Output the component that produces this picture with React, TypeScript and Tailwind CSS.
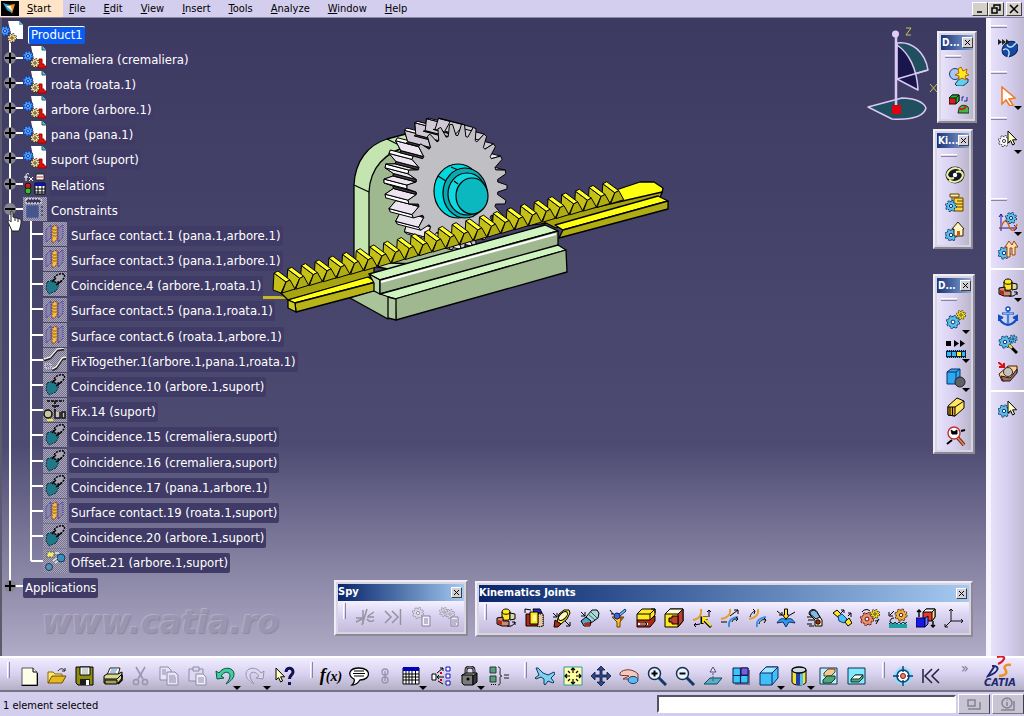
import { Fragment, ReactNode } from "react";

const UI_FONT = "font-['Tahoma','DejaVu_Sans_Condensed','Noto_Sans',sans-serif]";

type IconProps = { children: ReactNode; className?: string };

const Icon = ({ children, className = "size-5" }: IconProps) => (
  <svg viewBox="0 0 20 20" className={`block shrink-0 ${className}`} fill="none" aria-hidden="true">
    {children}
  </svg>
);

type CogProps = { x: number; y: number; r: number; fill?: string; line?: string };

const Cog = ({ x, y, r, fill = "#5cc0f0", line = "#10305c" }: CogProps) => {
  const step = (Math.PI * 2 * r) / 16;
  return (
    <g>
      <circle cx={x} cy={y} r={r} stroke={line} strokeWidth="3" strokeDasharray={`${step} ${step}`} />
      <circle cx={x} cy={y} r={r} fill={fill} stroke={line} />
      <circle cx={x} cy={y} r={r} stroke={fill} strokeWidth="1.4" strokeDasharray={`${step} ${step}`} />
      <circle cx={x} cy={y} r={r * 0.35} fill="#fff" stroke={line} />
    </g>
  );
};

const Cursor = ({ x, y, fill = "#ffffc0" }: { x: number; y: number; fill?: string }) => (
  <path
    d={`M${x} ${y}v12l2.600-2.400 2 4.400 2-1-2-4.200h4z`}
    fill={fill}
    stroke="#000"
    strokeWidth="1"
  />
);

/* ---------- standard toolbar icons ---------- */

const icons: Record<string, ReactNode> = {
  new: (
    <>
      <path d="M3 2h11l4 4v13H3z" fill="#ffffe8" stroke="#55546a" />
      <path d="M14 2v4h4" stroke="#000" fill="#fff" />
      <path d="M2.500 19.500h16V7" stroke="#000" />
    </>
  ),
  open: (
    <>
      <path d="M1 17V6h5l2 2h7v3" fill="#ffe87a" stroke="#8a6a00" />
      <path d="M1 17l4-7h14l-4 7z" fill="#e8b820" stroke="#6a5000" />
      <path d="M11 5c2-3 5-3 7 0m0-3v3h-3" stroke="#222" />
    </>
  ),
  save: (
    <>
      <path d="M1 1h17v18H3l-2-2z" fill="#8c8c10" stroke="#000" />
      <path d="M5 1h10v8H5z" fill="#fff" stroke="#000" />
      <path d="M7 3h6M7 5h6M7 7h6" stroke="#9aa" />
      <path d="M5 13h10v6H5z" fill="#1c1c1c" />
      <path d="M11 14h3v5h-3z" fill="#fff" />
    </>
  ),
  print: (
    <>
      <path d="M7 2h10l-2 7H4z" fill="#fff" stroke="#222" />
      <path d="M8 4h6M7 6h6" stroke="#4a90c0" />
      <path d="M1 10l3-2h11l4-2v6l-4 5H1z" fill="#d8d890" stroke="#000" />
      <path d="M1 13h13l5-5" stroke="#000" />
      <path d="M2 14h12v4H2z" fill="#a0a060" stroke="#000" />
      <path d="M15 18l4-4V9" stroke="#000" strokeWidth="1.500" />
    </>
  ),
  cut: (
    <g stroke="#9894ac" strokeWidth="1.500">
      <path d="M5 1l7 12M14 1L7 13" />
      <circle cx="5" cy="16" r="2.600" />
      <circle cx="14" cy="16" r="2.600" />
    </g>
  ),
  copy: (
    <g stroke="#8f8ba5" fill="#e8e4f8">
      <path d="M1 1h8l3 3v10H1z" />
      <path d="M8 6h8l3 3v10H8z" />
      <path d="M3 4h4M3 6h4M3 8h4M10 10h6M10 12h7M10 14h7M10 16h7" />
    </g>
  ),
  paste: (
    <g stroke="#8f8ba5" fill="#dcd8ee">
      <path d="M2 3h14v12H2z" />
      <path d="M6 1h6v4H6z" />
      <path d="M9 8h7l3 3v8H9z" fill="#f0edff" />
      <path d="M11 12h6M11 14h6M11 16h6" />
    </g>
  ),
  undo: (
    <path
      d="M1 5l1 8 7-1-3-2c3-5 9-5 9 0 0 3-2 5-4 8 5-3 8-6 8-10C19 1 8 0 4 7z"
      fill="#40d0a0"
      stroke="#105040"
    />
  ),
  redo: (
    <path
      d="M19 5l-1 8-7-1 3-2c-3-5-9-5-9 0 0 3 2 5 4 8-5-3-8-6-8-10C1 1 12 0 16 7z"
      fill="#dcd8ee"
      stroke="#9894ac"
    />
  ),
  help: (
    <>
      <Cursor x={1} y={2} />
      <path d="M11 6c0-5 7-5 7 0 0 3-3.500 3-3.500 7M14.500 16v3" stroke="#101058" strokeWidth="3" />
    </>
  ),
  comment: (
    <>
      <path d="M10 2c13 0 12 12 1 12-2 3-5 5-8 5 2-2 3-4 2-6C-2 9 0 2 10 2z" fill="#fff" stroke="#000" strokeWidth="1.300" />
      <path d="M5 5h10M4 7.500h12M5 10h10" stroke="#000" />
    </>
  ),
  link: (
    <g stroke="#9894ac" strokeWidth="1.300">
      <circle cx="10" cy="6" r="3" />
      <circle cx="10" cy="14" r="3" />
      <path d="M10 5v10" />
    </g>
  ),
  table: (
    <>
      <path d="M2 2h16v16H2z" fill="#fff" stroke="#000" />
      <path d="M2 1h16v4H2z" fill="#0000c0" />
      <path d="M2 8h16M2 11h16M2 14h16M5 5v13M8 5v13M11 5v13M14.500 5v13" stroke="#000" strokeWidth="1" />
    </>
  ),
  graph: (
    <>
      <path d="M1 8h4v6H1z" fill="#fff" stroke="#000" />
      <path d="M6 11h7M8 9l-2 2 2 2M6 7l6-5M12 5V2H9M7 15l5 3" stroke="#000" />
      <path d="M15 1h4v4h-4zM15 8h4v4h-4zM15 15h4v4h-4z" fill="#fff" stroke="#1010c0" />
      <path d="M10 6v2M10 13v2" stroke="#d00000" strokeWidth="2" />
    </>
  ),
  lock: (
    <>
      <path d="M7 9V4c0-4 8-4 8 0v5" stroke="#222" strokeWidth="3" />
      <path d="M7 9V4c0-4 8-4 8 0v5" stroke="#a8a8a8" strokeWidth="1" />
      <path d="M3 9l4-2h11l-3 3H3z" fill="#a8a8a8" stroke="#000" />
      <path d="M3 9h11v10H5l-2-2z" fill="#7a7a7a" stroke="#000" />
      <path d="M14 10l4-3v9l-4 3z" fill="#383838" stroke="#000" />
      <circle cx="9" cy="13" r="1.500" fill="#000" />
    </>
  ),
  list: (
    <>
      <path d="M1 1h6v6H1zM1 10h6v6H1z" fill="#50a080" stroke="#333" />
      <path d="M2 18.500h5" stroke="#000" strokeDasharray="1 1" />
      <path d="M9 1c3 0 2 3 2 6s1 3 2 3c-1 0-2 0-2 3s1 6-2 6M15 9h5M15 12h5" stroke="#222" />
    </>
  ),
  fly: (
    <path
      d="M1 2l2 0 5 5 5 2 6-3 1 2-4 4 3 4-1 1-5-2-3 4-1-1v-5l-3-2-5 2-1-1 4-3z"
      fill="#80d0f4"
      stroke="#103858"
    />
  ),
  fit: (
    <>
      <path d="M1 1h18v18H1z" fill="#ffffa0" stroke="#2898b0" />
      <path
        d="M10 2v5M8 4l2-2 2 2M10 18v-5M8 16l2 2 2-2M2 10h5M4 8l-2 2 2 2M18 10h-5M16 8l2 2-2 2M5 5l2 2M15 5l-2 2M5 15l2-2M15 15l-2-2"
        stroke="#000"
        strokeWidth="1.200"
      />
    </>
  ),
  pan: (
    <path
      d="M10 0l4 4h-3v5h5V6l4 4-4 4v-3h-5v5h3l-4 4-4-4h3v-5H4v3l-4-4 4-4v3h5V4H6z"
      fill="#2a4a90"
      stroke="#101838"
      strokeWidth=".8"
    />
  ),
  rotate: (
    <>
      <path d="M1 7c3-4 12-5 18 1v5c-4 4-8 3-9 0H4l6-3c-3-1-7 0-9-1z" fill="#f8c8b8" stroke="#703838" />
      <ellipse cx="14" cy="14" rx="5" ry="3.600" fill="#60b8f0" stroke="#104070" />
    </>
  ),
  zoomIn: (
    <>
      <path d="M11 11l8 8" stroke="#103868" strokeWidth="3" />
      <circle cx="7.500" cy="7.500" r="6" fill="#e8f4ff" stroke="#183050" strokeWidth="1.500" />
      <path d="M4.500 7.500h6M7.500 4.500v6" stroke="#000" strokeWidth="2" />
    </>
  ),
  zoomOut: (
    <>
      <path d="M11 11l8 8" stroke="#103868" strokeWidth="3" />
      <circle cx="7.500" cy="7.500" r="6" fill="#e8f4ff" stroke="#183050" strokeWidth="1.500" />
      <path d="M4.500 7.500h6" stroke="#000" strokeWidth="2" />
    </>
  ),
  normal: (
    <>
      <path d="M1 18l6-6h12l-5 6z" fill="#58b0c8" stroke="#104858" />
      <path d="M10 15V4" stroke="#554a80" strokeDasharray="2 1" />
      <path d="M7 6l3-5 3 5z" fill="#e8e4f8" stroke="#554a80" />
    </>
  ),
  multi: (
    <>
      <path d="M4 4h15v15H4z" fill="#7a7890" />
      <path d="M2 2h15v15H2z" fill="#38c8f8" stroke="#101858" />
      <path d="M10 2h7v7h-7z" fill="#7a60d8" stroke="#101858" />
      <path d="M9.500 2v15M2 9.500h15" stroke="#101858" strokeWidth="1.200" />
    </>
  ),
  iso: (
    <>
      <path d="M1 7l6-6h12v11l-6 7H1z" fill="#40c0f8" stroke="#102868" />
      <path d="M1 7l6-6h12l-6 6z" fill="#a0e8ff" stroke="#102868" />
      <path d="M13 7v12" stroke="#102868" />
    </>
  ),
  shading: (
    <>
      <path d="M3 4v12c0 4 14 4 14 0V4z" fill="#f0e040" stroke="#000" />
      <path d="M7 6v13h4V6z" fill="#2040a0" />
      <path d="M11 6v13h3V6z" fill="#50c0e8" />
      <ellipse cx="10" cy="4" rx="7" ry="3" fill="#d0d8e0" stroke="#000" strokeWidth="1.300" />
    </>
  ),
  hide: (
    <>
      <path d="M1 2h17v16H1z" fill="#c0f0ff" stroke="#103050" />
      <path d="M5 7l4-4h7v3l-4 4H5z" fill="#f0c890" stroke="#604020" />
      <path d="M4 14l4-4h8v3l-4 4H4z" fill="#50a878" stroke="#103828" />
    </>
  ),
  swap: (
    <>
      <path d="M1 2h17v16H1z" fill="#80e8ff" stroke="#103050" />
      <path d="M4 13l4-4h8v3l-4 4H4z" fill="#50a878" stroke="#103828" />
      <path d="M4 13h8l4-4H8z" fill="#fff" stroke="#103828" />
    </>
  ),
  target: (
    <>
      <circle cx="10" cy="10" r="9" fill="#90e0f8" />
      <circle cx="10" cy="10" r="6" fill="#fff" stroke="#104070" strokeWidth="1.600" />
      <circle cx="10" cy="10" r="2.500" fill="#f08060" stroke="#702020" />
      <path d="M10 0v6M10 14v6M0 10h6M14 10h6" stroke="#103878" strokeWidth="1.400" />
    </>
  ),
  rewind: <path d="M2 3v14M11 3l-7 7 7 7M18 3l-7 7 7 7" stroke="#222040" strokeWidth="1.500" />,

  /* spy */
  spyCut: (
    <path d="M1 11h6M8 3v14M12 2L7 18M19 5l-6 4M12 10h7M12 12c2 3 5 3 7 1M1 15l6-3" stroke="#96929f" strokeWidth="1.500" />
  ),
  spyEnd: <path d="M2 4l6 6-6 6M9 4l6 6-6 6M17.500 2v16" stroke="#96929f" strokeWidth="1.500" />,
  spyCog: (
    <>
      <Cog x={7} y={6} r={4.5} fill="#dcd8ee" line="#96929f" />
      <path d="M11 9h8v10h-8zM13 12h4M13 14h4M13 16h4" fill="#f4f0ff" stroke="#85819a" />
    </>
  ),
  spyCogs: (
    <>
      <Cog x={5} y={5} r={3.5} fill="#dcd8ee" line="#96929f" />
      <Cog x={11} y={7} r={3.5} fill="#dcd8ee" line="#96929f" />
      <path d="M12 10h7v9h-7zM13 13h5M13 15h5M13 17h4" fill="#f4f0ff" stroke="#85819a" />
    </>
  ),

  /* joints */
  revolute: (
    <>
      <path d="M6 4c0-4 8-4 8 0v6c0 3-8 3-8 0z" fill="#ffe820" stroke="#000" />
      <path d="M6 4c0 3 8 3 8 0" stroke="#000" />
      <path d="M14 5l5 1v5l-5 1z" fill="#e0d8a0" stroke="#000" />
      <path d="M1 10l6-1v4h6v5H6l-5-2z" fill="#d08878" stroke="#000" />
      <path d="M2 12l4 1v4l-4-1z" fill="#b02818" />
      <path d="M11 18c4 1 7-1 8-4M19 17v-3h-3" stroke="#000" />
    </>
  ),
  prismatic: (
    <>
      <path d="M2 6h17v12H2z" fill="#b02818" stroke="#000" />
      <path d="M14 6h5v12l-5 1z" fill="#e8c8a0" stroke="#000" strokeDasharray="1 1" />
      <path d="M9 1h7l2 4h-8z" fill="#2030d0" stroke="#000" />
      <path d="M6 4h8v12H6z" fill="#ffe820" stroke="#000" />
      <path d="M9 7h3v6H9z" fill="#fff8a0" />
      <path d="M1 1l6 1M1 1v4" stroke="#000" />
    </>
  ),
  cylindrical: (
    <>
      <path d="M5 14l2-8 5-4h5l1 3-3 6-6 5z" fill="#ffe820" stroke="#000" />
      <ellipse cx="11" cy="8" rx="5.500" ry="3" transform="rotate(-45 11 8)" fill="#fff8c0" stroke="#000" />
      <path d="M3 12l6 4-3 3H2z" fill="#b02818" stroke="#000" />
      <path d="M1 5l4 4M1 9h4V5M13 13l5 5M18 14v4h-4" stroke="#000" />
    </>
  ),
  screw: (
    <>
      <path d="M6 9l6-7h5l2 3-1 5-7 5z" fill="#a8d8d8" stroke="#000" />
      <path d="M8 6l7 6M11 4l6 6" stroke="#405860" />
      <path d="M1 13l5-4 5 4-1 5H4z" fill="#50a8c8" stroke="#000" />
      <path d="M4 15l6-1v4H5z" fill="#b02818" />
      <path d="M1 4l4 4M1 8h4V4" stroke="#000" />
    </>
  ),
  spherical: (
    <>
      <path d="M4 9h12l-4 5v5H9v-5z" fill="#ffc020" stroke="#604000" />
      <path d="M12 9v5l3-5z" fill="#b04010" />
      <circle cx="9" cy="8" r="3" fill="#4060e0" stroke="#102060" />
      <path d="M11 6l6-5 1 2-6 5z" fill="#60c8f8" stroke="#103060" />
      <path d="M2 2l3 4M3 6h3" stroke="#000" />
    </>
  ),
  planar: (
    <>
      <path d="M1 12l5-4h13v5l-5 6H1z" fill="#b02818" stroke="#000" />
      <path d="M1 6l5-5h13v6l-5 5H1z" fill="#ffe820" stroke="#000" />
      <path d="M1 6h13l5-5M14 6v6" stroke="#000" />
      <path d="M2 15h10v2H2z" fill="#fff" />
      <path d="M4 16h7M9 14l2 2-2 2M15 5l4-4M15 1h4v4" stroke="#000" />
    </>
  ),
  rigid: (
    <>
      <path d="M1 6l5-5h13v12l-5 6H1z" fill="#ffe820" stroke="#000" />
      <path d="M14 6l5-5v12l-5 6z" fill="#c04030" stroke="#000" />
      <path d="M1 6h13l5-5H6z" fill="#fff8d0" stroke="#000" />
      <path d="M8 8h6v8H8v-2H5v-4h3z" fill="#c04030" stroke="#000" />
    </>
  ),
  pointCurve: (
    <>
      <path d="M9 1c1 6-2 10-8 11" stroke="#e0a020" strokeWidth="2" />
      <path d="M19 19l-8-8M10 16v-6h6" stroke="#000" strokeWidth="3" />
      <path d="M19 18l-8-8v5M11 10h5" stroke="#ffe820" strokeWidth="1.800" />
      <path d="M17 9V2M15 4l2-2 2 2M8 16l-6 1M4 15l-2 2 2 2" stroke="#000" />
    </>
  ),
  slideCurve: (
    <>
      <path d="M10 1c1 6-3 9-9 10" stroke="#e0a020" strokeWidth="1.800" />
      <path d="M9 19c-1-6 2-9 9-10" stroke="#3090e0" strokeWidth="1.800" />
      <path d="M1 14h6M10 8l8-6M14 2h4v4M12 14c1-3 3-3 6-3M16 9l2 2-2 2" stroke="#000" />
    </>
  ),
  rollCurve: (
    <>
      <path d="M10 1c1 6-3 9-9 10" stroke="#e0a020" strokeWidth="1.800" />
      <path d="M9 19c-1-6 2-9 9-10" stroke="#3090e0" strokeWidth="1.800" />
      <path d="M2 9c1-4 4-6 5-6M5 1l2 2-1 3M11 16c1-4 4-5 7-4M16 10l2 2-2 3" stroke="#000" />
    </>
  ),
  pointSurface: (
    <>
      <path d="M1 15c2-4 6-6 9-3 3-3 7-1 9 3l-6-1-3 5-3-5z" fill="#3098e8" stroke="#103070" />
      <path d="M8.500 1h3v6h2l-3.500 4-3.500-4h2z" fill="#ffe820" stroke="#000" />
      <path d="M1 3l5 4M3 7h3V4M19 4l-5 3" stroke="#000" />
    </>
  ),
  universal: (
    <>
      <path d="M5 6c0-6 8-6 9 0l4 6v6h-7v-6z" fill="#ffe8b8" stroke="#000" />
      <path d="M6 6c0-5 6-5 8 0l2 3-4 2z" fill="#80b8e8" stroke="#000" />
      <circle cx="14" cy="14" r="2.200" fill="#b02818" stroke="#000" />
      <path d="M8 9H3M4 12h6M8 16H3M5 18h5" stroke="#000" />
    </>
  ),
  cv: (
    <>
      <path d="M1 5l4-3 5 5-3 3zM13 14l4-4 3 5-4 3z" fill="#ffe820" stroke="#000" />
      <path d="M6 8l4-2 5 5-3 4-5-2z" fill="#50c0f8" stroke="#104070" />
      <path d="M9 5l3-3M9 2h3v3M16 8l3-3M19 9V5h-3" stroke="#000" />
    </>
  ),
  gearJoint: (
    <>
      <Cog x={7} y={11} r={5.5} fill="#f09070" line="#501008" />
      <Cog x={15} y={6} r={3.5} fill="#ffe820" line="#403000" />
      <path d="M2 4c2-3 6-3 8-1M15 13c2 0 3-1 4-2M16 16l3-5" stroke="#000" />
    </>
  ),
  rackJoint: (
    <>
      <path d="M1 16h18v4H1z" fill="#20a0a0" />
      <path d="M1 16l2-2 2 2 2-2 2 2 2-2 2 2 2-2 2 2 2-2" stroke="#103838" fill="#20a0a0" />
      <Cog x={13} y={7} r={5} fill="#f0b048" line="#502008" />
      <path d="M6 3L2 7M1 4v4h4M6 10c-3 0-4 2-4 4" stroke="#000" />
    </>
  ),
  cableJoint: (
    <>
      <path d="M7 4l3-3h9v8l-3 4H7z" fill="#e83828" stroke="#000" />
      <path d="M7 4l3-3h9l-3 3z" fill="#fff" stroke="#000" />
      <path d="M16 4v9l3-4V1z" fill="#ffe080" stroke="#000" />
      <path d="M0 10h9v9H0z" fill="#1818e8" stroke="#000040" />
      <path d="M9 10l3-2v8l-3 3z" fill="#7080ff" stroke="#000040" />
      <path d="M3 9V2M1 4l2-2 2 2M17 13v6M15 17l2 2 2-2" stroke="#000" strokeWidth="1.400" />
    </>
  ),
  axisJoint: <path d="M7 13V1M5 3l2-2 2 2M7 13h12M17 11l2 2-2 2M7 13l-6 6M1 16v3h3" stroke="#111" />,

  /* right side */
  kinematics: (
    <>
      <ellipse cx="12" cy="11" rx="8.500" ry="7" transform="rotate(-40 12 11)" fill="#1848a0" stroke="#0a1f58" />
      <path d="M5 12c4-3 8 1 5 7M9 5c-1 4 4 5 6 3l4-4" stroke="#c0e8ff" strokeWidth="1.400" />
      <path d="M0 1v6l4-3zM4 1v6l4-3zM8 1v6l4-3z" fill="#222" />
    </>
  ),
  arrow: <path d="M4 1l13 11-6 1 4 6-3 1-4-6-4 4z" fill="#fff" stroke="#f07818" strokeWidth="1.500" />,
  cogCursor: (
    <>
      <Cog x={6} y={11} r={4.5} fill="#fff" line="#444" />
      <Cursor x={10} y={1} />
    </>
  ),
  cogCursorBlue: (
    <>
      <Cog x={6} y={11} r={5} />
      <Cursor x={10} y={1} />
    </>
  ),
  simLaw: (
    <>
      <path d="M3 19V2M1 5l2-3 2 3M1 16h18M16 13l3 3-3 3" stroke="#1818a0" />
      <path d="M3 16C6 6 9 8 11 14s6 6 8-2" stroke="#d06010" strokeWidth="1.300" />
      <Cog x={13} y={6} r={4.5} />
    </>
  ),
  mechUpdate: (
    <>
      <Cog x={6} y={13} r={5} />
      <path d="M7 7l4-6 3 4 2-4 4 6h-3v8h-3V8h-2v9H9V7z" fill="#ffe0a8" stroke="#a04010" />
    </>
  ),
  anchor: (
    <>
      <path d="M10 4v15M4 7.500h12M1 11c1 5 4 7 9 8 5-1 8-3 9-8M1 15v-5l4 2M19 15v-5l-4 2" stroke="#1050c0" strokeWidth="2.200" />
      <path d="M10 5v13M5 7.500h10" stroke="#90d0ff" strokeWidth=".8" />
      <circle cx="10" cy="3" r="2" fill="#fff" stroke="#1050c0" strokeWidth="1.400" />
    </>
  ),
  cogWand: (
    <>
      <Cog x={7} y={8} r={5} />
      <Cog x={15} y={5} r={3} />
      <path d="M11 11l8 8" stroke="#000" strokeWidth="3" />
      <path d="M11 11l3 3" stroke="#ffe820" strokeWidth="2" />
    </>
  ),
  speed: (
    <>
      <path d="M1 12l9-8 9 0v6l-7 8-8 1z" fill="#f8d090" stroke="#501808" />
      <path d="M3 14l9 2 7-9v4l-7 8H5z" fill="#b06840" stroke="#101840" />
      <circle cx="10" cy="10" r="4.500" fill="#c8c0b8" stroke="#333" />
      <path d="M0 0l6 5M6 1v4H1" stroke="#d81010" strokeWidth="2" />
    </>
  ),

  /* floating windows */
  clash: (
    <>
      <circle cx="6" cy="8" r="5.500" fill="#a8c8f0" stroke="#204070" />
      <path d="M6 18l5-6 8 1v3l-5 4H8z" fill="#60d0f0" stroke="#103858" />
      <path d="M12 1l2 4 4-2-1 4 3 2-4 1 1 4-4-2-3 2 0-4-4-1 4-2-1-4z" fill="#ffe820" stroke="#c06000" />
    </>
  ),
  compare: (
    <>
      <path d="M0 4l3-3h7v6l-3 3H0z" fill="#d02020" stroke="#300" />
      <path d="M7 4l3-3v6l-3 3z" fill="#30b040" stroke="#020" />
      <path d="M0 4l3-3h7L7 4z" fill="#30b040" stroke="#020" />
      <path d="M10 15c0-5 9-5 10 0v4H9z" fill="#40b848" stroke="#103010" />
      <path d="M10 14c2 2 5 2 7-2" stroke="#d02020" strokeWidth="2" />
      <path d="M13 7V3h2M18 3v4h-3" stroke="#2020a0" />
    </>
  ),
  swirl: (
    <>
      <ellipse cx="10" cy="10" rx="9.500" ry="8.500" fill="#101828" />
      <path d="M9 13c-7 2-9-4-4-8 4-3 9-2 11 0M11 7c7-2 9 4 4 8-4 3-9 2-11 0" stroke="#f0f0a0" strokeWidth="2" />
      <circle cx="10" cy="10" r="2.200" fill="#fff" />
    </>
  ),
  cogTree: (
    <>
      <path d="M9 5h9v13H9z" stroke="#604000" fill="#ffd840" />
      <path d="M12 8h6M12 11h6M12 14h6" stroke="#604000" />
      <path d="M5 1h9v3H5zM7 4v5" fill="#fff0a0" stroke="#604000" />
      <Cog x={6} y={13} r={4.5} />
    </>
  ),
  cogHome: (
    <>
      <Cog x={6} y={14} r={5} />
      <path d="M7 8l6-7 6 7h-1v7H9V8z" fill="#fff4c0" stroke="#302000" />
      <path d="M12 10h3v5h-3z" fill="#c06020" />
    </>
  ),
  cogsGold: (
    <>
      <Cog x={7} y={12} r={5.5} />
      <Cog x={15} y={5} r={3.5} fill="#ffe820" line="#504000" />
    </>
  ),
  replay: (
    <>
      <path d="M0 2h5v5H0z" fill="#000" />
      <path d="M8 1v7l5-3.500zM14 1v7l5-3.500z" fill="#000" />
      <path d="M0 11h20v8H0z" fill="#101840" />
      <path d="M1 13h4v4H1zM6 13h4v4H6zM16 13h3v4h-3z" fill="#38b8e8" />
      <path d="M11 13h4v4h-4z" fill="#ffe820" />
      <path d="M0 11.500h20M0 18.500h20" stroke="#60c0f0" strokeDasharray="1 1" />
    </>
  ),
  swept: (
    <>
      <path d="M1 4l4-3h9v11l-4 4H1z" fill="#30a8f0" stroke="#083068" />
      <path d="M1 4h9l4-3M10 4v12" stroke="#083068" />
      <circle cx="14" cy="14" r="5" fill="#606068" stroke="#222" />
    </>
  ),
  trace: (
    <>
      <path d="M2 9L11 1l7 3v7l-9 8-7-1z" fill="#ffe860" stroke="#000" />
      <path d="M2 10h7v9l-7-1z" fill="#e0a830" stroke="#000" />
      <path d="M9 10l9-6M4 10v8M6.500 10v8" stroke="#000" />
    </>
  ),
  magnify: (
    <>
      <circle cx="8" cy="7" r="6" fill="#fff" stroke="#c03030" strokeWidth="1.400" />
      <path d="M5 4l3 2 3-2v4H6z" stroke="#000" fill="#000" />
      <path d="M12 12l6 7" stroke="#602010" strokeWidth="3.500" />
      <path d="M12 12l6 7" stroke="#e88850" strokeWidth="1.800" />
      <path d="M1 18l5-4M15 5l4-1" stroke="#000" strokeWidth="2" />
    </>
  ),
};

/* ---------- buttons, grips and bars ---------- */

type ToolProps = { name: string; label: string; drop?: boolean; vertical?: boolean; narrow?: boolean };

const DropArrow = () => (
  <svg viewBox="0 0 8 4" className="absolute right-0 bottom-0 h-1 w-2" aria-hidden="true">
    <path d="M0 0h8L4 4z" fill="#000" />
  </svg>
);

const toolWidth = ({ drop, vertical, narrow }: ToolProps) => {
  if (narrow) return "w-6";
  return drop && !vertical ? "w-[30px] pr-0.5" : "w-7";
};

const Tool = (props: ToolProps) => (
  <button
    type="button"
    aria-label={props.label}
    className={`relative flex h-7 shrink-0 items-center justify-center ${toolWidth(props)}`}
  >
    {props.name === "formula" ? (
      <span className="font-['Liberation_Serif',serif] text-lg leading-5 font-bold text-black italic">
        f<span className="text-sm">(x)</span>
      </span>
    ) : (
      <Icon>{icons[props.name]}</Icon>
    )}
    {props.drop && <DropArrow />}
  </button>
);

const VGrip = ({ className = "w-[15px] pl-[7px]" }: { className?: string }) => (
  <div className={`flex h-7 shrink-0 ${className}`}>
    <div className="h-4 w-[3px] border-r border-l border-l-white border-r-[#8a86a0]" />
  </div>
);

const HGrip = () => <div className="h-[3px] w-4 border-t border-b border-t-white border-b-[#8a86a0]" />;

const CloseBox = ({ title }: { title: string }) => (
  <button
    type="button"
    aria-label={`Close ${title}`}
    className="flex size-[11px] shrink-0 items-center justify-center border border-t-white border-r-[#404040] border-b-[#404040] border-l-white bg-[#d4d0d8]"
  >
    <svg viewBox="0 0 7 7" className="size-[7px]" aria-hidden="true">
      <path d="M1 1l5 5M6 1L1 6" stroke="#000" />
    </svg>
  </button>
);

type WindowProps = { title: string; label: string; className: string; children: ReactNode; vertical?: boolean };

const ToolWindow = ({ title, label, className, children, vertical }: WindowProps) => (
  <section
    aria-label={label}
    className={`absolute border-2 border-t-[#f0eef4] border-r-[#8c8a94] border-b-[#8c8a94] border-l-[#f0eef4] bg-[#d8d4e4] p-0.5 ${className}`}
  >
    <header
      className={`flex items-center justify-between font-bold text-white ${
        vertical
          ? "h-[15px] bg-linear-to-r from-[#1c3478] to-[#8ca8d8] pl-px text-[10px]"
          : "h-[17px] bg-linear-to-r from-[#0a246a] to-[#a6caf0] pr-0.5 text-[11px]"
      }`}
    >
      <span>{title}</span>
      <CloseBox title={label} />
    </header>
    {children}
  </section>
);

const ToolRow = ({ children }: { children: ReactNode }) => (
  <div className="flex items-center bg-linear-to-b from-[#f4f0ff] via-[#d8d0f0] to-[#c4bcd8] pt-0.5 pb-px">
    <VGrip className="w-[13px] pl-[5px]" />
    {children}
  </div>
);

const ToolColumn = ({ children, className = "" }: { children: ReactNode; className?: string }) => (
  <div className={`flex flex-col items-center bg-linear-to-r from-[#e8e2fa] via-[#d8d0f0] to-[#bcb6cc] pl-1 ${className}`}>
    <div className="flex h-3 w-full items-center">
      <HGrip />
    </div>
    {children}
  </div>
);

/* ---------- specification tree ---------- */

type NodeKind = "product" | "part" | "relations" | "constraints" | "surface" | "coincidence" | "fixTogether" | "fix" | "offset" | "none";

type TreeNode = { text: string; kind: NodeKind; level: number; mark?: "plus" | "minus"; selected?: boolean };

const tree: TreeNode[] = [
  { text: "Product1", kind: "product", level: 0, selected: true },
  { text: "cremaliera (cremaliera)", kind: "part", level: 1, mark: "plus" },
  { text: "roata (roata.1)", kind: "part", level: 1, mark: "plus" },
  { text: "arbore (arbore.1)", kind: "part", level: 1, mark: "plus" },
  { text: "pana (pana.1)", kind: "part", level: 1, mark: "plus" },
  { text: "suport (suport)", kind: "part", level: 1, mark: "plus" },
  { text: "Relations", kind: "relations", level: 1, mark: "plus" },
  { text: "Constraints", kind: "constraints", level: 1, mark: "minus" },
  { text: "Surface contact.1 (pana.1,arbore.1)", kind: "surface", level: 2 },
  { text: "Surface contact.3 (pana.1,arbore.1)", kind: "surface", level: 2 },
  { text: "Coincidence.4 (arbore.1,roata.1)", kind: "coincidence", level: 2 },
  { text: "Surface contact.5 (pana.1,roata.1)", kind: "surface", level: 2 },
  { text: "Surface contact.6 (roata.1,arbore.1)", kind: "surface", level: 2 },
  { text: "FixTogether.1(arbore.1,pana.1,roata.1)", kind: "fixTogether", level: 2 },
  { text: "Coincidence.10 (arbore.1,suport)", kind: "coincidence", level: 2 },
  { text: "Fix.14 (suport)", kind: "fix", level: 2 },
  { text: "Coincidence.15 (cremaliera,suport)", kind: "coincidence", level: 2 },
  { text: "Coincidence.16 (cremaliera,suport)", kind: "coincidence", level: 2 },
  { text: "Coincidence.17 (pana.1,arbore.1)", kind: "coincidence", level: 2 },
  { text: "Surface contact.19 (roata.1,suport)", kind: "surface", level: 2 },
  { text: "Coincidence.20 (arbore.1,suport)", kind: "coincidence", level: 2 },
  { text: "Offset.21 (arbore.1,suport)", kind: "offset", level: 2 },
  { text: "Applications", kind: "none", level: 1, mark: "plus" },
];

const Checker = () => (
  <>
    <rect width="24" height="24" fill="#77738f" />
    <path
      d="M0 .5h24M0 2.500h24M0 4.500h24M0 6.500h24M0 8.500h24M0 10.500h24M0 12.500h24M0 14.500h24M0 16.500h24M0 18.500h24M0 20.500h24M0 22.500h24"
      stroke="#aaa6bc"
      strokeDasharray="1 1"
    />
    <path
      d="M1 1.500h23M1 3.500h23M1 5.500h23M1 7.500h23M1 9.500h23M1 11.500h23M1 13.500h23M1 15.500h23M1 17.500h23M1 19.500h23M1 21.500h23M1 23.500h23"
      stroke="#aaa6bc"
      strokeDasharray="1 1"
    />
  </>
);

const nodeArt: Record<NodeKind, ReactNode> = {
  product: (
    <>
      <path d="M8 0h11l4 4v14H12z" fill="#fff" />
      <path d="M19 0v4h4" fill="#50c0d0" />
      <Cog x={5} y={10} r={4} fill="#40a0ff" line="#0828a0" />
      <Cog x={12} y={17} r={3.5} fill="#ffe8a0" line="#403018" />
    </>
  ),
  part: (
    <>
      <path d="M8 0h11l4 4v16H12z" fill="#fff" />
      <path d="M19 0v4h4" fill="#50c0d0" stroke="#205868" />
      <Cog x={5} y={10} r={4} fill="#40a0ff" line="#0828a0" />
      <path d="M16 13h3v5h2v2h2v2h-8z" fill="#e01010" stroke="#a00" />
      <Cog x={12} y={17} r={3.5} fill="#ffe8a0" line="#403018" />
    </>
  ),
  relations: (
    <>
      <path d="M6 2c-2-1-3 0-3 2v5M1 5h4M6 5l4 4M10 5L6 9" stroke="#fff" fill="none" />
      <path d="M13 2h8v6h-8z" fill="#fff" stroke="#222" />
      <path d="M14 5h6" stroke="#c02020" />
      <circle cx="5" cy="14" r="3" fill="#c02020" stroke="#400" />
      <circle cx="5" cy="19" r="3" fill="#30c030" stroke="#030" />
      <path d="M12 11h10v11H12z" fill="#fff" stroke="#000" />
      <path d="M12 11h10v3H12z" fill="#1010b0" />
      <path d="M12 17h10M12 20h10M15 14v8M19 14v8" stroke="#000" />
    </>
  ),
  constraints: (
    <>
      <Checker />
      <path d="M3 2h15v4H3z" fill="#38345a" stroke="#fff" strokeDasharray="2 1" />
      <path d="M3 8h13v13H3z" fill="#46568c" stroke="#8898c8" strokeDasharray="1 1" />
      <path d="M19 9v12" stroke="#222" strokeDasharray="2 2" />
    </>
  ),
  surface: (
    <>
      <Checker />
      <path d="M3 8l5-5v13l-5 4zM15 6l5-3v12l-5 5z" fill="#8a84a8" stroke="#3828a0" strokeDasharray="1 1" />
      <path d="M9 5l5-2v15l-5 3z" fill="#f0c040" stroke="#803040" strokeDasharray="2 1" />
      <path d="M10 8h3M10 11h3M10 14h3" stroke="#906010" />
    </>
  ),
  coincidence: (
    <>
      <Checker />
      <path d="M4 10l6-2 6 5-3 6-7 3-3-5z" fill="#207888" stroke="#102838" strokeDasharray="2 1" />
      <ellipse cx="16" cy="6" rx="6" ry="3.500" transform="rotate(-30 16 6)" fill="#a8a4b8" stroke="#000" strokeWidth="1.500" strokeDasharray="2 1" />
      <path d="M9 10l4-4M13 13l6-4" stroke="#000" strokeWidth="1.500" />
    </>
  ),
  fixTogether: (
    <>
      <Checker />
      <path d="M1 12l6-2 7-8 7-1M9 22l4-2 6-9 4-1" stroke="#222" strokeWidth="3" fill="none" />
      <path d="M1 11l6-2 7-8 7-1M9 21l4-2 6-9 4-1" stroke="#f0f0f0" strokeWidth="1.500" fill="none" />
      <path d="M2 16h6v4H2z" stroke="#fff" fill="none" strokeDasharray="1 1" />
    </>
  ),
  fix: (
    <>
      <Checker />
      <path d="M4 3h17M12 3v11M9 8h7" stroke="#222" strokeWidth="2" strokeDasharray="3 1" />
      <circle cx="5" cy="16" r="4" fill="#c8c4a0" stroke="#111" strokeWidth="1.500" />
      <path d="M12 14v6h5v-6M19 20v-6h3v6z" stroke="#111" strokeWidth="1.500" fill="#c8c4b0" />
      <path d="M4 22h6" stroke="#f0e820" strokeWidth="2" />
    </>
  ),
  offset: (
    <>
      <Checker />
      <path d="M4 3h7v5H4z" fill="#f0e870" stroke="#555" strokeDasharray="2 1" />
      <circle cx="18" cy="9" r="4" fill="#3890b8" stroke="#203858" />
      <circle cx="6" cy="18" r="3.500" fill="#5890b8" stroke="#203858" />
      <path d="M10 12l4-3M12 14l3-2M12 4h4" stroke="#e8e8e8" strokeWidth="1.500" />
    </>
  ),
  none: null,
};

const Expander = ({ mark }: { mark: "plus" | "minus" }) => (
  <svg viewBox="0 0 12 12" className="block size-3" aria-hidden="true">
    <circle cx="6" cy="6" r="6" fill="#85838f" />
    <path d={mark === "plus" ? "M1 6h10M6 1v10" : "M1 6h10"} stroke="#000" strokeWidth="2" />
  </svg>
);

const labelStyle = (node: TreeNode) => {
  if (node.selected) return "ml-1 h-[18px] border-t border-l border-white bg-[#0a5cf0] leading-4";
  return `bg-[#3f3b66] leading-5 ${node.kind === "none" ? "" : "ml-0.5"}`;
};

const TreeRow = ({ node }: { node: TreeNode }) => (
  <li className="flex items-center">
    {node.level > 0 && (
      <div className="flex w-4 shrink-0 justify-end pb-1">
        {node.mark && (
          <button type="button" aria-label={`Expand ${node.text}`} className="block">
            <Expander mark={node.mark} />
          </button>
        )}
      </div>
    )}
    {node.level === 1 && <span className="mb-1 h-0.5 w-[7px] shrink-0 bg-white" />}
    {node.level === 2 && <span className="mb-1 ml-[15px] h-0.5 w-3 shrink-0 bg-white" />}
    {node.kind !== "none" && (
      <svg viewBox="0 0 24 24" className="mb-1 block size-6 shrink-0" fill="none" aria-hidden="true">
        {nodeArt[node.kind]}
      </svg>
    )}
    <span className={`rounded-xs px-0.5 text-[13px] whitespace-nowrap text-white ${labelStyle(node)}`}>{node.text}</span>
  </li>
);

/* ---------- 3D model ---------- */

const TEETH = 26;
const DEPTH = { x: -23, y: -6 };

type Point = { x: number; y: number };

const gearPoints: Point[] = Array.from({ length: TEETH }, (_, i) => {
  const a = (i / TEETH) * Math.PI * 2;
  const w = Math.PI / TEETH;
  return [
    [-0.8, 0.82],
    [-0.25, 1],
    [0.25, 1],
    [0.8, 0.82],
  ].map(([t, k]) => ({ x: 457 + Math.cos(a + w * t) * 50 * k, y: 187 + Math.sin(a + w * t) * 63 * k }));
}).flat();

const toPoints = (list: Point[]) => list.map((p) => `${p.x.toFixed(1)},${p.y.toFixed(1)}`).join(" ");

const shift = (p: Point): Point => ({ x: p.x + DEPTH.x, y: p.y + DEPTH.y });

const Gear = () => (
  <g stroke="#000" strokeLinejoin="round">
    <polygon points={toPoints(gearPoints.map(shift))} fill="#222" />
    {gearPoints.map((p, i) => {
      const q = gearPoints[(i + 1) % gearPoints.length];
      // only the flanks turned towards the viewer
      const facing = (q.y - p.y) * DEPTH.x - (q.x - p.x) * DEPTH.y;
      if (facing <= 0) return null;
      const part = i % 4;
      return (
        <polygon
          key={i}
          points={toPoints([p, q, shift(q), shift(p)])}
          fill={part === 1 ? "#fff" : part === 3 ? "#444" : p.y < 150 ? "#d0c8d4" : "#ece4f0"}
        />
      );
    })}
    <polygon points={toPoints(gearPoints)} fill="#c0c0c4" />
    <g strokeWidth="1.200">
      <ellipse cx="458" cy="191" rx="24" ry="27" fill="#00d8e0" />
      <path d="M438 176l8 5M451 167l12 5" />
      <ellipse cx="465" cy="193" rx="22" ry="25" fill="#0ca8b0" />
      <ellipse cx="467" cy="194" rx="19" ry="21" fill="#10d8e0" />
      <ellipse cx="472" cy="196" rx="16" ry="18" fill="#0cb8c0" />
      <path d="M454 181l4 3" />
    </g>
  </g>
);

const RackTeeth = () => (
  <g stroke="#000" strokeLinejoin="round">
    {Array.from({ length: 25 }, (_, k) => {
      const i = 24 - k;
      const x = 274 + i * 13.7;
      const y = 273 - i * 3.72;
      return (
        <g key={i}>
          <polygon points={`${x},${y} ${x + 12},${y + 9} ${x + 7},${y + 20} ${x - 1},${y + 17}`} fill="#c4c018" />
          <polygon points={`${x},${y} ${x + 4},${y - 2} ${x + 16},${y + 7} ${x + 12},${y + 9}`} fill="#ffff30" />
          <polygon points={`${x + 12},${y + 9} ${x + 16},${y + 7} ${x + 21},${y + 16} ${x + 8},${y + 20}`} fill="#b0ac14" />
        </g>
      );
    })}
  </g>
);

const Model = () => (
  <svg viewBox="260 100 420 230" className="absolute top-[82px] left-[260px] h-[230px] w-[420px]" role="img" aria-label="Rack and pinion assembly">
    <g stroke="#000" strokeWidth="1.300" strokeLinejoin="round">
      <path d="M354 262V185c1-24 14-40 33-46l34-9 20 20v130z" fill="#c4e4b0" />
      <path d="M369 262V192c1-24 16-40 40-46l50-10v130z" fill="#a0b890" />
      <path d="M354 185l15 7M387 139l16 8" />
    </g>
    <path d="M263 296h16l9 1v2h-25z" fill="#c8b820" />
    <Gear />
    <g stroke="#000" strokeWidth="1.300" strokeLinejoin="round">
      <polygon points="616,190 640,182 654,182 663,188 662,193 560,222 500,228" fill="#ffff10" />
      <polygon points="662,192 660,198 556,228 540,220" fill="#a8a410" />
      <polygon points="555,225 658,196 668,201 563,230" fill="#ffff10" />
      <polygon points="563,230 668,201 668,209 559,238" fill="#b0ac14" />
      <polygon points="280,292 374,266 374,276 288,300" fill="#a8a410" />
      <polygon points="288,300 368,277 376,282 295,303" fill="#ffff10" />
      <polygon points="295,303 376,282 375,291 296,312" fill="#b8b418" />
      <polygon points="288,300 295,303 296,312 288,308" fill="#d0cc20" />
    </g>
    <RackTeeth />
    <g stroke="#000" strokeWidth="1.300" strokeLinejoin="round">
      <polygon points="350,298 374,291 380,293 397,300 388,319" fill="#a8c498" />
      <polygon points="369,274 545,225 558,231 380,280" fill="#d0f4c0" />
      <polygon points="369,274 380,280 380,294 374,291 374,283" fill="#b8d8a8" />
      <polygon points="380,280 558,231 558,246 380,294" fill="#a0b890" />
      <path d="M381 282L556 234" stroke="#fff" strokeWidth="2" />
      <polygon points="380,294 558,245 566,250 395,299" fill="#d0f4c0" />
      <polygon points="395,299 566,250 567,272 396,320" fill="#a0b890" />
      <polygon points="388,297 396,299 396,320 388,318" fill="#b0c8a0" />
    </g>
  </svg>
);

const Compass = () => (
  <svg viewBox="865 20 76 104" className="absolute top-0.5 left-[865px] h-[104px] w-[76px]" role="img" aria-label="Compass">
    <g stroke="#dcc8f4" strokeWidth="1.500" strokeLinejoin="round">
      <path d="M868 107l34-9c12 0 22 4 24 10-2 8-14 12-34 11z" fill="#205060" />
      <path d="M897 43c14-2 28 8 31 27l-31 9z" fill="#205060" />
      <path d="M897 45c12 8 20 24 21 45l-21-11z" fill="#18164a" />
      <path d="M896 35v70" strokeWidth="2.500" />
      <path d="M897 79l31-9" />
    </g>
    <circle cx="895.500" cy="34" r="3.500" fill="#e0ccf8" />
    <rect x="892" y="105" width="9" height="9" fill="#e00010" />
    <path d="M906 28h5l-5 7h5M930 84l7 8M937 84l-7 8" stroke="#c8c060" strokeWidth="1" fill="none" />
  </svg>
);

const HandCursor = () => (
  <svg viewBox="0 0 16 22" className="pointer-events-none absolute top-[192px] left-[7px] h-[22px] w-4" aria-hidden="true">
    <path d="M4 1c2 0 2 1 2 6l7 2c2 1 1 6-1 12H5L1 12c0-2 2-2 3 0z" fill="#fff" stroke="#222" />
    <path d="M8 8v3M11 9v3" stroke="#222" />
  </svg>
);

const menus = ["File", "Edit", "View", "Insert", "Tools", "Analyze", "Window", "Help"];

const joints: [string, string][] = [
  ["revolute", "Revolute Joint"],
  ["prismatic", "Prismatic Joint"],
  ["cylindrical", "Cylindrical Joint"],
  ["screw", "Screw Joint"],
  ["spherical", "Spherical Joint"],
  ["planar", "Planar Joint"],
  ["rigid", "Rigid Joint"],
  ["pointCurve", "Point Curve Joint"],
  ["slideCurve", "Slide Curve Joint"],
  ["rollCurve", "Roll Curve Joint"],
  ["pointSurface", "Point Surface Joint"],
  ["universal", "Universal Joint"],
  ["cv", "CV Joint"],
  ["gearJoint", "Gear Joint"],
  ["rackJoint", "Rack Joint"],
  ["cableJoint", "Cable Joint"],
  ["axisJoint", "Axis-based Joint"],
];

const bottomTools: (ToolProps | "grip")[] = [
  { name: "new", label: "New" },
  { name: "open", label: "Open" },
  { name: "save", label: "Save" },
  { name: "print", label: "Quick Print" },
  { name: "cut", label: "Cut" },
  { name: "copy", label: "Copy" },
  { name: "paste", label: "Paste" },
  { name: "undo", label: "Undo", drop: true },
  { name: "redo", label: "Redo", drop: true },
  { name: "help", label: "What's This?" },
  "grip",
  { name: "formula", label: "Formula" },
  { name: "comment", label: "Comment" },
  { name: "link", label: "Check Analysis", narrow: true },
  { name: "table", label: "Design Table", drop: true },
  { name: "graph", label: "Knowledge Inspector" },
  { name: "lock", label: "Lock", drop: true },
  { name: "list", label: "Equivalent Dimensions" },
  "grip",
  { name: "fly", label: "Fly Mode" },
  { name: "fit", label: "Fit All In" },
  { name: "pan", label: "Pan" },
  { name: "rotate", label: "Rotate" },
  { name: "zoomIn", label: "Zoom In" },
  { name: "zoomOut", label: "Zoom Out" },
  { name: "normal", label: "Normal View" },
  { name: "multi", label: "Create Multi-View" },
  { name: "iso", label: "Isometric View", drop: true },
  { name: "shading", label: "Shading", drop: true },
  { name: "hide", label: "Hide/Show" },
  { name: "swap", label: "Swap Visible Space" },
  "grip",
  { name: "target", label: "Target" },
  { name: "rewind", label: "Rewind" },
];

const WindowButton = ({ label, d }: { label: string; d: string }) => (
  <button
    type="button"
    aria-label={label}
    className="flex h-3.5 w-4 items-center justify-center border border-t-white border-r-[#404040] border-b-[#404040] border-l-white bg-[#d4d0c8]"
  >
    <svg viewBox="0 0 10 10" className="size-2.5" fill="none" aria-hidden="true">
      <path d={d} stroke="#000" strokeWidth="1.500" />
    </svg>
  </button>
);

const MenuBar = () => (
  <nav className="flex h-[18px] shrink-0 items-center border-b border-[#8c88a4] bg-[#d4ceee] text-[11px] text-black">
    <div className="flex h-full items-center bg-[#ffe4c8] pl-px">
      <svg viewBox="0 0 18 15" className="h-[15px] w-[18px]" aria-hidden="true">
        <path d="M0 0h18v15H0z" fill="#000" />
        <path d="M2 2l7 2 2 8-5-3z" fill="#30a8d8" />
        <path d="M8 4l6-1-3 10z" fill="#f09030" />
        <path d="M5 5l5 0 1 5z" fill="#fff0c0" />
      </svg>
      <button type="button" className="h-full w-11 pr-1 pt-px text-center">
        <span className="underline">S</span>tart
      </button>
    </div>
    <div className="flex gap-[18px] pt-px pl-1.5">
      {menus.map((menu) => (
        <button key={menu} type="button">
          <span className="underline">{menu[0]}</span>
          {menu.slice(1)}
        </button>
      ))}
    </div>
    <div className="ml-auto flex pr-0.5">
      <WindowButton label="Minimize" d="M2 8h5" />
      <WindowButton label="Restore" d="M3 3V1h6v5H7M1 4h5v5H1z" />
      <span className="w-0.5" />
      <WindowButton label="Close" d="M1 1l8 8M9 1L1 9" />
    </div>
  </nav>
);

const Viewport = () => (
  <main className="relative min-w-0 flex-1 overflow-hidden border-l-2 border-[#5c5a6c] bg-[linear-gradient(to_bottom,#3d3a62_0%,#4e4b73_67%,#8783a3_86%,#b0abc6_100%)]">
    <div className="absolute inset-y-0 -left-0.5 w-full">
      <Model />
      <Compass />
      <p className="absolute top-[586px] left-[42px] font-['DejaVu_Sans',sans-serif] text-[32px] leading-9 font-bold text-[#9a95b0] italic [text-shadow:-1px_-1px_1px_#b4afc8,1px_1px_1px_#8c87a2]">
        www.catia.ro
      </p>
      <div className="absolute top-[22px] left-[9px] h-[545px] w-0.5 bg-white" />
      <div className="absolute top-[200px] left-[30px] h-[343px] w-0.5 bg-white" />
      <ul className="absolute top-1 left-0 grid h-[579px] auto-rows-fr">
        {tree.map((node) => (
          <TreeRow key={node.text} node={node} />
        ))}
      </ul>
      <HandCursor />

      <ToolWindow title="D..." label="DMU Space Analysis" vertical className="top-[13px] left-[937px] w-10">
        <ToolColumn className="pb-px">
          <Tool name="clash" label="Clash" />
          <Tool name="compare" label="Compare Products" />
        </ToolColumn>
      </ToolWindow>
      <ToolWindow title="Ki..." label="Kinematics Update" vertical className="top-[111px] left-[933px] w-10">
        <ToolColumn className="pt-px">
          <Tool name="swirl" label="Update Positions" />
          <Tool name="cogTree" label="Import Sub-Mechanisms" />
          <Tool name="cogHome" label="Reset Positions" />
        </ToolColumn>
      </ToolWindow>
      <ToolWindow title="D..." label="DMU Kinematics" vertical className="top-[256px] left-[933px] w-[42px]">
        <ToolColumn className="gap-px">
          <Tool name="cogsGold" label="Simulation" drop vertical />
          <Tool name="replay" label="Replay" drop vertical />
          <Tool name="swept" label="Swept Volume" drop vertical />
          <Tool name="trace" label="Trace" />
          <Tool name="magnify" label="Clash Detection" />
        </ToolColumn>
      </ToolWindow>

      <ToolWindow title="Spy" label="Spy" className="top-[562px] left-[334px] w-[134px]">
        <ToolRow>
          <Tool name="spyCut" label="Spy Cut" />
          <Tool name="spyEnd" label="Spy End" />
          <Tool name="spyCog" label="Spy Part" />
          <Tool name="spyCogs" label="Spy Assembly" />
        </ToolRow>
      </ToolWindow>
      <ToolWindow title="Kinematics Joints" label="Kinematics Joints" className="top-[563px] left-[475px] w-[498px]">
        <ToolRow>
          {joints.map(([name, label]) => (
            <Tool key={name} name={name} label={label} />
          ))}
        </ToolRow>
      </ToolWindow>
    </div>
  </main>
);

const SideGrip = ({ className = "h-4" }: { className?: string }) => (
  <div className={`flex w-full items-center ${className}`}>
    <HGrip />
  </div>
);

const SideBar = () => (
  <aside className="flex w-[38px] shrink-0 flex-col items-center border-l-[5px] border-[#f8f4ff] bg-linear-to-r from-[#e6e0fa] via-[#d6d0f0] to-[#c0bad4]">
    <SideGrip />
    <Tool name="kinematics" label="DMU Kinematics Workbench" />
    <SideGrip className="h-5" />
    <Tool name="arrow" label="Select" drop vertical />
    <SideGrip />
    <Tool name="cogCursor" label="Product Selection" drop vertical />
    <SideGrip className="h-[54px] pt-9" />
    <Tool name="simLaw" label="Simulation With Laws" drop vertical />
    <Tool name="mechUpdate" label="Mechanism Dressup" />
    <hr className="my-1 w-full border-t-2 border-white" />
    <Tool name="revolute" label="Revolute Joint" drop vertical />
    <Tool name="anchor" label="Fixed Part" />
    <Tool name="cogWand" label="Assembly Constraints Conversion" />
    <Tool name="speed" label="Speed And Acceleration" />
    <hr className="my-1 w-full border-t-2 border-white" />
    <Tool name="cogCursorBlue" label="Mechanism Analysis" />
  </aside>
);

const Logo = () => (
  <div className="ml-auto flex w-12 flex-col items-center self-end pb-0.5">
    <svg viewBox="0 0 26 22" className="h-[22px] w-7" fill="none" aria-hidden="true">
      <path d="M10 1c6-1 8 0 7 2-1 2-3 4-6 5" stroke="#d81828" strokeWidth="2" />
      <path d="M5 10c8-1 8 6-4 10l6-9" stroke="#202870" strokeWidth="2" />
      <path d="M24 9c-4-1-8 1-6 4s3 6-6 7" stroke="#f09020" strokeWidth="2.500" />
    </svg>
    <span className="text-[11px] leading-[10px] font-bold text-[#202870] italic">CATIA</span>
  </div>
);

const BottomBar = () => (
  <footer className="flex h-9 shrink-0 items-center border-t-2 border-b-2 border-t-white border-b-[#75728a] bg-linear-to-b from-[#f0ecff] via-[#d8d2f0] to-[#b4afc4] pt-1">
    <VGrip />
    {bottomTools.map((tool, i) => (
      <Fragment key={i}>{tool === "grip" ? <VGrip className="w-[18px] pl-[11px]" /> : <Tool {...tool} />}</Fragment>
    ))}
    <span className="ml-4 self-start text-sm leading-3 text-[#77748c]">»</span>
    <Logo />
  </footer>
);

const StatusBar = () => (
  <div className="flex h-6 shrink-0 items-center bg-[#d4ceee] pl-[3px] text-[11px] text-black">
    <label htmlFor="power-input" className="flex-1 pt-1">
      1 element selected
    </label>
    <input
      id="power-input"
      type="text"
      className="h-[18px] w-[299px] border-2 border-t-[#55535e] border-r-white border-b-white border-l-[#55535e] bg-white px-1 outline-none"
    />
    <button
      type="button"
      aria-label="Power input"
      className="ml-0.5 flex h-5 w-8 items-center justify-center border border-t-white border-r-[#404040] border-b-[#777] border-l-white bg-[#c8c4d4]"
    >
      <svg viewBox="0 0 14 12" className="h-3 w-3.5" fill="none" aria-hidden="true">
        <path d="M1 2h7v6H1zM1 11h12V4" stroke="#85828f" strokeWidth="1.500" />
      </svg>
    </button>
    <button
      type="button"
      aria-label="Information"
      className="ml-0.5 flex h-5 w-8 items-center justify-center border border-t-white border-r-[#404040] border-b-[#777] border-l-white bg-[#c8c4d4]"
    >
      <svg viewBox="0 0 16 14" className="h-3.5 w-4" fill="none" aria-hidden="true">
        <circle cx="7" cy="6" r="5" stroke="#85828f" strokeWidth="1.500" />
        <path d="M7 5v4M7 2.500v1M1 13h13V4" stroke="#85828f" strokeWidth="1.500" />
      </svg>
    </button>
  </div>
);

const App = () => (
  <div className={`flex h-screen flex-col overflow-hidden bg-[#d4ceee] ${UI_FONT}`}>
    <MenuBar />
    <div className="flex min-h-0 flex-1">
      <Viewport />
      <SideBar />
    </div>
    <BottomBar />
    <StatusBar />
  </div>
);

export default App;
